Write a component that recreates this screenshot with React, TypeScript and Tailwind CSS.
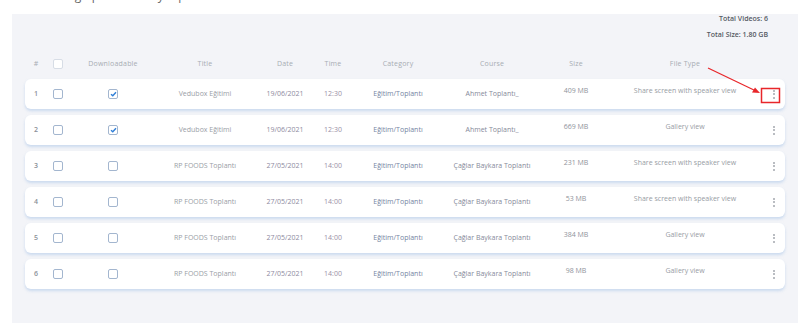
const ROWS = [
  { n: 1, dl: true, title: "Vedubox Eğitimi", date: "19/06/2021", time: "12:30", cat: "Eğitim/Toplantı", course: "Ahmet Toplantı_", size: "409 MB", type: "Share screen with speaker view" },
  { n: 2, dl: true, title: "Vedubox Eğitimi", date: "19/06/2021", time: "12:30", cat: "Eğitim/Toplantı", course: "Ahmet Toplantı_", size: "669 MB", type: "Gallery view" },
  { n: 3, dl: false, title: "RP FOODS Toplantı", date: "27/05/2021", time: "14:00", cat: "Eğitim/Toplantı", course: "Çağlar Baykara Toplantı", size: "231 MB", type: "Share screen with speaker view" },
  { n: 4, dl: false, title: "RP FOODS Toplantı", date: "27/05/2021", time: "14:00", cat: "Eğitim/Toplantı", course: "Çağlar Baykara Toplantı", size: "53 MB", type: "Share screen with speaker view" },
  { n: 5, dl: false, title: "RP FOODS Toplantı", date: "27/05/2021", time: "14:00", cat: "Eğitim/Toplantı", course: "Çağlar Baykara Toplantı", size: "384 MB", type: "Gallery view" },
  { n: 6, dl: false, title: "RP FOODS Toplantı", date: "27/05/2021", time: "14:00", cat: "Eğitim/Toplantı", course: "Çağlar Baykara Toplantı", size: "98 MB", type: "Gallery view" },
];

const COLS =
  "grid grid-cols-[22px_21px_90px_94px_66px_30px_100px_88px_80px_138px_1fr] items-center text-center";

function Checkbox({ checked, light }: { checked?: boolean; light?: boolean }) {
  return (
    <span
      className={`mx-auto flex h-[10px] w-[10px] items-center justify-center rounded-[2px] border-[1.5px] bg-white ${
        light ? "border-[#d7dde6]" : "border-[#a3b6cf]"
      }`}
    >
      {checked && (
        <svg width="7" height="6" viewBox="0 0 7 6">
          <path d="M1 3.2 L2.8 4.8 L6 1.2" fill="none" stroke="#2f7fd8" strokeWidth="1.4" />
        </svg>
      )}
    </span>
  );
}

function Kebab() {
  return (
    <span className="flex flex-col items-center gap-[1.5px]">
      <span className="h-[2px] w-[2px] rounded-full bg-[#a3a7ae]" />
      <span className="h-[2px] w-[2px] rounded-full bg-[#a3a7ae]" />
      <span className="h-[2px] w-[2px] rounded-full bg-[#a3a7ae]" />
    </span>
  );
}

export default function App() {
  return (
    <div className="relative h-[336px] w-[810px] overflow-hidden bg-white font-['Open_Sans',sans-serif]">
      <div className="h-[4px] overflow-hidden pl-[64px]">
        <p className="-mt-[12px] text-[12px] leading-[15px] text-[#666]">Big uploads of my top</p>
      </div>

      <div className="mx-[12px] mt-[10px] bg-[#f3f4f8] pb-[34px]">
        <div className="flex flex-col items-end gap-[6px] pr-[30px] text-[7px] font-semibold leading-[10px] text-[#555a63]">
          <span>Total Videos: 6</span>
          <span>Total Size: 1.80 GB</span>
        </div>

        <div className={`${COLS} mx-[13px] mt-[14px] h-[20px] text-[7px] tracking-[0.2px] text-[#a7acb3]`}>
          <span>#</span>
          <Checkbox light />
          <span>Downloadable</span>
          <span>Title</span>
          <span>Date</span>
          <span>Time</span>
          <span>Category</span>
          <span>Course</span>
          <span>Size</span>
          <span>File Type</span>
          <span />
        </div>

        <div className="mx-[13px] mt-[5px] flex flex-col gap-[6px]">
          {ROWS.map((r) => (
            <div
              key={r.n}
              className={`${COLS} h-[30px] rounded-[6px] bg-white text-[7px] shadow-[0_2px_3px_rgba(170,196,232,0.55)]`}
            >
              <span className="font-semibold text-[#8a8f97]">{r.n}</span>
              <Checkbox />
              <Checkbox checked={r.dl} />
              <span className="whitespace-nowrap text-[#9a9ea6]">{r.title}</span>
              <span className="whitespace-nowrap text-[#8d8aa0]">{r.date}</span>
              <span className="whitespace-nowrap text-[#9a90a6]">{r.time}</span>
              <span className="whitespace-nowrap text-[#7484a2]">{r.cat}</span>
              <span className="whitespace-nowrap text-[#868a9a]">{r.course}</span>
              <span className="mb-[6px] whitespace-nowrap text-[#8f939b]">{r.size}</span>
              <span className="mb-[6px] whitespace-nowrap text-[#989ca4]">{r.type}</span>
              <span className="flex justify-end pr-[10px]">
                <Kebab />
              </span>
            </div>
          ))}
        </div>
      </div>

      <svg className="pointer-events-none absolute left-0 top-0" width="810" height="336">
        <line x1="708" y1="68" x2="756" y2="91" stroke="#e8262a" strokeWidth="1.2" />
        <path d="M760 93 L752 92.5 L755 87.5 Z" fill="#e8262a" />
        <rect x="761.5" y="88.5" width="18" height="14" fill="none" stroke="#e8262a" strokeWidth="1.5" />
      </svg>
    </div>
  );
}
